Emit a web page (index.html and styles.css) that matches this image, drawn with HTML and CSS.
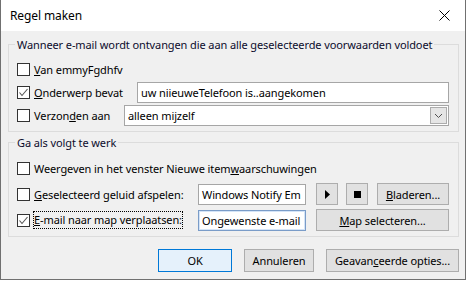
FILE: index.html
```html
<!DOCTYPE html>
<html lang="nl">
<head>
  <meta charset="UTF-8">
  <title>Regel maken</title>
  <link rel="stylesheet" href="styles.css">
</head>
<body>

  <div class="window">
    <div class="titlebar">
      <span class="title">Regel maken</span>
      <svg class="close" width="11" height="11" viewBox="0 0 11 11">
        <path d="M0.5 0.5 L10.5 10.5 M10.5 0.5 L0.5 10.5" />
      </svg>
    </div>

    <div class="dialog">
      <!-- Conditions -->
      <fieldset class="group group-conditions">
        <legend>Wanneer e-mail wordt ontvangen die aan alle geselecteerde voorwaarden voldoet</legend>

        <div class="row">
          <label class="check"><span class="box"></span><span><u>V</u>an emmyFgdhfv</span></label>
        </div>

        <div class="row">
          <label class="check">
            <span class="box"><svg width="11" height="11" viewBox="0 0 11 11"><polyline points="1.5,5.5 4,8.5 9.5,2" /></svg></span>
            <span><u>O</u>nderwerp bevat</span>
          </label>
          <div class="textbox subject-field">uw niieuweTelefoon is..aangekomen</div>
        </div>

        <div class="row">
          <label class="check"><span class="box"></span><span>Verzon<u>d</u>en aan</span></label>
          <div class="textbox combo recipient-field">
            <span>alleen mijzelf</span>
            <span class="combo-button">
              <svg width="9" height="6" viewBox="0 0 9 6"><polyline points="1,1 4.5,4.5 8,1" /></svg>
            </span>
          </div>
        </div>
      </fieldset>

      <!-- Actions -->
      <fieldset class="group group-actions">
        <legend>Ga als volgt te werk</legend>

        <div class="row">
          <label class="check"><span class="box"></span><span>Weergeven in het venster Nieuwe item<u>w</u>aarschuwingen</span></label>
        </div>

        <div class="row">
          <label class="check action-label"><span class="box"></span><span><u>G</u>eselecteerd geluid afspelen:</span></label>
          <div class="textbox action-field">Windows Notify Em</div>
          <button class="btn btn-icon play-btn">
            <svg width="5" height="9" viewBox="0 0 5 9"><polygon points="0,0 5,4.5 0,9" /></svg>
          </button>
          <button class="btn btn-icon stop-btn">
            <svg width="7" height="7" viewBox="0 0 7 7"><rect width="7" height="7" /></svg>
          </button>
          <button class="btn browse-btn"><span><u>B</u>laderen...</span></button>
        </div>

        <div class="row">
          <label class="check action-label">
            <span class="box"><svg width="11" height="11" viewBox="0 0 11 11"><polyline points="1.5,5.5 4,8.5 9.5,2" /></svg></span>
            <span class="focus-text"><u>E</u>-mail naar map verplaatsen:</span>
          </label>
          <div class="textbox action-field focused">Ongewenste e-mail</div>
          <button class="btn folder-btn"><span><u>M</u>ap selecteren...</span></button>
        </div>
      </fieldset>

      <div class="footer">
        <button class="btn btn-default ok-btn">OK</button>
        <button class="btn cancel-btn">Annuleren</button>
        <button class="btn advanced-btn">Geavan<u>c</u>eerde opties...</button>
      </div>
    </div>
  </div>

</body>
</html>
```

FILE: styles.css
```css
/* Basic Styling */
body {
  margin: 0;
  background-color: #fff;
  font-family: "Noto Sans", "DejaVu Sans", sans-serif;
  font-size: 11px;
  letter-spacing: -0.1px;
  color: #000;
}

.window {
  width: 466px;
  height: 280px;
  box-sizing: border-box;
  border: 1px solid #707070;
  border-top: 0;
  background-color: #f0f0f0;
  display: flex;
  flex-direction: column;
}

.titlebar {
  flex: none;
  height: 31px;
  background-color: #fff;
  display: flex;
  align-items: center;
  justify-content: space-between;
  padding: 0 15px 0 9px;
  font-size: 12px;
}

.close path {
  stroke: #000;
  stroke-width: 1;
  fill: none;
}

.dialog {
  flex: 1;
  padding: 6px 6px 6px 7px;
  display: flex;
  flex-direction: column;
}

/* Group boxes */
.group {
  margin: 0;
  padding: 7px 9px 5px 8px;
  border: 1px solid #dcdcdc;
  min-width: 0;
  display: flex;
  flex-direction: column;
}

.group legend {
  padding: 0 2px;
  margin-left: -2px;
  line-height: 15px;
  white-space: nowrap;
  color: #0c0c2c;
}

.group-conditions {
  gap: 2px;
}

.group-conditions .row {
  height: 21px;
}

.group-actions {
  margin-top: 3px;
  gap: 4px;
}

.group-actions .row {
  height: 22px;
}

.row {
  display: flex;
  align-items: center;
}

/* Checkboxes */
.check {
  display: flex;
  align-items: center;
  gap: 4px;
  white-space: nowrap;
}

.box {
  flex: none;
  width: 13px;
  height: 13px;
  box-sizing: border-box;
  border: 1px solid #333;
  background-color: #fff;
}

.box svg {
  display: block;
}

.box polyline {
  fill: none;
  stroke: #555;
  stroke-width: 1.1;
}

.action-label {
  width: 181px;
  flex: none;
}

.focus-text {
  outline: 1px dotted #000;
  line-height: 16px;
}

/* Text fields */
.textbox {
  height: 21px;
  box-sizing: border-box;
  border: 1px solid #a6a6a6;
  background-color: #fff;
  padding: 0 3px;
  line-height: 19px;
  white-space: nowrap;
  overflow: hidden;
}

.subject-field {
  width: 312px;
  margin-left: auto;
}

.recipient-field {
  width: 325px;
  margin-left: auto;
}

.combo {
  display: flex;
  align-items: center;
  justify-content: space-between;
  padding-right: 1px;
}

.combo-button {
  width: 17px;
  height: 17px;
  box-sizing: border-box;
  border: 1px solid #acacac;
  background-color: #e5e5e5;
  display: flex;
  align-items: center;
  justify-content: center;
}

.combo-button polyline {
  fill: none;
  stroke: #505050;
  stroke-width: 1;
}

.action-field {
  width: 108px;
  flex: none;
}

.focused {
  border-color: #7a9cc8;
  box-shadow: inset 0 0 0 1px #d4e4f7;
}

/* Buttons */
.btn {
  height: 22px;
  box-sizing: border-box;
  border: 1px solid #adadad;
  background-color: #e1e1e1;
  font-family: inherit;
  font-size: 11px;
  letter-spacing: -0.1px;
  color: #000;
  padding: 0;
  display: flex;
  align-items: center;
  justify-content: center;
}

.btn-icon {
  width: 22px;
  flex: none;
}

.btn-icon svg {
  fill: #000;
}

.play-btn {
  margin-left: 10px;
}

.stop-btn {
  margin-left: 8px;
}

.browse-btn {
  width: 72px;
  margin-left: auto;
}

.folder-btn {
  width: 133px;
  margin-left: auto;
}

.footer {
  display: flex;
  justify-content: flex-end;
  gap: 12px;
  margin-top: 12px;
}

.footer .btn {
  height: 23px;
}

.btn-default {
  border-color: #0078d7;
  background-color: #e5f1fb;
}

.ok-btn {
  width: 74px;
}

.cancel-btn {
  width: 70px;
}

.advanced-btn {
  width: 133px;
}
```
